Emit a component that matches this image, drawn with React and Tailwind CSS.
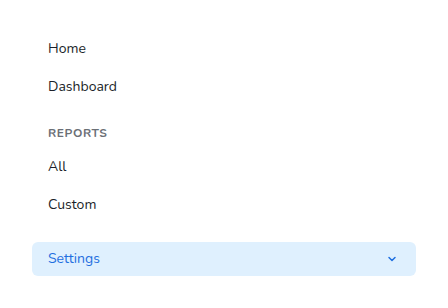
import { ChevronDown } from "lucide-react";

const items = ["Home", "Dashboard"];
const reports = ["All", "Custom"];

function Item({ label }) {
  return (
    <li>
      <a className="flex h-[34px] items-center rounded-md px-4 text-sm text-[#1b1f29]">
        {label}
      </a>
    </li>
  );
}

export default function App() {
  return (
    <div className="min-h-screen bg-white px-8 pt-[32px] font-['Nunito','Lato',sans-serif]">
      <ul className="flex flex-col gap-1">
        {items.map((i) => (
          <Item key={i} label={i} />
        ))}
      </ul>

      <p className="mt-[21px] mb-[9px] px-4 text-xs font-bold uppercase tracking-wider text-[#6b6f76]">
        Reports
      </p>

      <ul className="flex flex-col gap-1">
        {reports.map((i) => (
          <Item key={i} label={i} />
        ))}
      </ul>

      <button className="mt-[20px] flex h-[34px] w-full items-center justify-between rounded-md bg-[#dff0fe] pl-4 pr-[18px] text-sm text-[#1f6fe0]">
        <span>Settings</span>
        <ChevronDown size={12} strokeWidth={3} />
      </button>
    </div>
  );
}
